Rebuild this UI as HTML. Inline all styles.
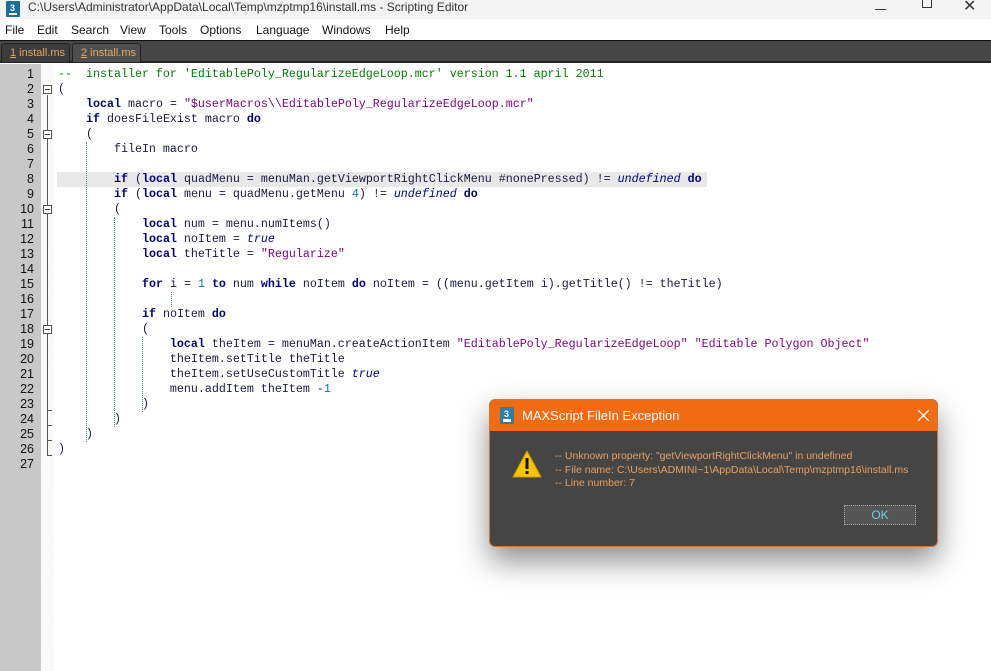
<!DOCTYPE html>
<html><head><meta charset="utf-8"><style>
*{margin:0;padding:0;box-sizing:border-box}
body{width:991px;height:671px;overflow:hidden;background:#fff;font-family:"Liberation Sans",sans-serif;position:relative}
.title{position:absolute;left:0;top:0;width:991px;height:19px;background:#f3f3f3;font-size:12px;color:#333}
.title span{position:absolute;left:28px;top:0px}
.menu{position:absolute;left:0;top:19px;width:991px;height:21px;background:#fff;font-size:12px;color:#111}
.menu span{position:absolute;top:4px}
.tabs{position:absolute;left:0;top:40px;width:991px;height:23px;background:#464646;border-top:1px solid #111;border-bottom:2px solid #222}
.tab{position:absolute;top:2px;height:19px;font-size:11px;color:#e8a860;padding:3px 0 0 8px;white-space:nowrap;border:1px solid #222;border-bottom:none;border-radius:3px 3px 0 0}
.gut{position:absolute;left:0;top:64px;width:41px;height:607px;background:#c8c8c8}
.fold{position:absolute;left:41px;top:64px;width:13px;height:607px;background:repeating-linear-gradient(45deg,#f4f4f4 0 1px,#fff 1px 2px)}
.ln{position:absolute;left:0;width:34px;text-align:right;font-family:"Liberation Sans",sans-serif;font-size:12.5px;color:#111}
pre{position:absolute;left:58px;top:67px;font-family:"Liberation Mono",monospace;font-size:11.67px;line-height:15px;color:#1a1a40}
.k{color:#00007f;font-weight:bold}.s{color:#7f007f}.n{color:#007f7f}.c{color:#007f00}.i{color:#00007f;font-style:italic}
.hl{position:absolute;left:57px;top:172px;width:650px;height:15px;background:#e8e8e8}
.fb{position:absolute;left:43px;width:9px;height:9px;border:1px solid #555;background:#fff}
.fb:after{content:"";position:absolute;left:1px;top:3px;width:5px;height:1px;background:#333}
.vl{position:absolute;left:47px;width:1px;background:#555}
.tk{position:absolute;left:47px;width:5px;height:1px;background:#555}
.guide{position:absolute;width:0;border-left:1px dotted #4a8a6a}
.dlg{position:absolute;left:489px;top:399px;width:449px;height:148px;background:#454545;border-radius:6px;border:1px solid #c87840;box-shadow:0 14px 30px rgba(0,0,0,.45);overflow:hidden}
.dh{height:31px;background:#f26a12;color:#fff;font-size:13px;position:relative}
.dh span{position:absolute;left:32px;top:8px}
.msg{position:absolute;left:65px;top:50px;font-size:10.5px;line-height:13.5px;color:#e8a060}
.ok{position:absolute;left:354px;top:105px;width:72px;height:20px;border:1px dotted #aaa;background:#555;color:#6fd0e0;font-size:12px;text-align:center;line-height:18px}
</style></head><body>
<div class="title"><svg style="position:absolute;left:6px;top:1px" width="14" height="16"><rect width="14" height="16" rx="1" fill="#1a6f94"/><text x="4" y="10" font-size="9" fill="#fff" font-family="Liberation Sans" font-weight="bold">3</text><rect x="3" y="12" width="8" height="2" fill="#fff"/></svg><span>C:\Users\Administrator\AppData\Local\Temp\mzptmp16\install.ms - Scripting Editor</span>
<div style="position:absolute;left:875px;top:9px;width:11px;height:1px;background:#333"></div>
<div style="position:absolute;left:922px;top:-3px;width:10px;height:11px;border:1px solid #333"></div>
<div style="position:absolute;left:963px;top:-4px;font-size:16px;color:#333">✕</div></div>
<div class="menu"><span style="left:5px">File</span><span style="left:37px">Edit</span><span style="left:71px">Search</span><span style="left:120px">View</span><span style="left:159px">Tools</span><span style="left:200px">Options</span><span style="left:256px">Language</span><span style="left:322px">Windows</span><span style="left:385px">Help</span></div>
<div class="tabs"><div class="tab" style="left:1px;width:69px;background:#3c3c3c"><u>1</u> install.ms</div><div class="tab" style="left:72px;width:69px;background:#4e4e4e"><u>2</u> install.ms</div></div>
<div class="gut"></div><div class="fold"></div>
<div class="hl"></div>
<div style="position:absolute;left:0;top:67px">
<div class="ln" style="top:0">1</div><div class="ln" style="top:15px">2</div><div class="ln" style="top:30px">3</div><div class="ln" style="top:45px">4</div><div class="ln" style="top:60px">5</div><div class="ln" style="top:75px">6</div><div class="ln" style="top:90px">7</div><div class="ln" style="top:105px">8</div><div class="ln" style="top:120px">9</div><div class="ln" style="top:135px">10</div><div class="ln" style="top:150px">11</div><div class="ln" style="top:165px">12</div><div class="ln" style="top:180px">13</div><div class="ln" style="top:195px">14</div><div class="ln" style="top:210px">15</div><div class="ln" style="top:225px">16</div><div class="ln" style="top:240px">17</div><div class="ln" style="top:255px">18</div><div class="ln" style="top:270px">19</div><div class="ln" style="top:285px">20</div><div class="ln" style="top:300px">21</div><div class="ln" style="top:315px">22</div><div class="ln" style="top:330px">23</div><div class="ln" style="top:345px">24</div><div class="ln" style="top:360px">25</div><div class="ln" style="top:375px">26</div><div class="ln" style="top:390px">27</div>
</div>
<div class="vl" style="top:95px;height:360px"></div>
<div class="tk" style="top:455px"></div><div class="tk" style="top:440px"></div><div class="tk" style="top:425px"></div><div class="tk" style="top:410px"></div>
<div class="fb" style="top:85px"></div><div class="fb" style="top:130px"></div><div class="fb" style="top:205px"></div><div class="fb" style="top:325px"></div>
<div class="guide" style="left:86px;top:142px;height:300px"></div>
<div class="guide" style="left:114px;top:217px;height:210px"></div>
<div class="guide" style="left:142px;top:337px;height:75px"></div>
<div class="guide" style="left:171px;top:292px;height:15px"></div>
<pre><span class="c">--  installer for 'EditablePoly_RegularizeEdgeLoop.mcr' version 1.1 april 2011</span>
(
    <span class="k">local</span> macro = <span class="s">"$userMacros\\EditablePoly_RegularizeEdgeLoop.mcr"</span>
    <span class="k">if</span> doesFileExist macro <span class="k">do</span>
    (
        fileIn macro

        <span class="k">if</span> (<span class="k">local</span> quadMenu = menuMan.getViewportRightClickMenu #nonePressed) != <span class="i">undefined</span> <span class="k">do</span>
        <span class="k">if</span> (<span class="k">local</span> menu = quadMenu.getMenu <span class="n">4</span>) != <span class="i">undefined</span> <span class="k">do</span>
        (
            <span class="k">local</span> num = menu.numItems()
            <span class="k">local</span> noItem = <span class="i">true</span>
            <span class="k">local</span> theTitle = <span class="s">"Regularize"</span>

            <span class="k">for</span> i = <span class="n">1</span> <span class="k">to</span> num <span class="k">while</span> noItem <span class="k">do</span> noItem = ((menu.getItem i).getTitle() != theTitle)

            <span class="k">if</span> noItem <span class="k">do</span>
            (
                <span class="k">local</span> theItem = menuMan.createActionItem <span class="s">"EditablePoly_RegularizeEdgeLoop"</span> <span class="s">"Editable Polygon Object"</span>
                theItem.setTitle theTitle
                theItem.setUseCustomTitle <span class="i">true</span>
                menu.addItem theItem -<span class="n">1</span>
            )
        )
    )
)</pre>
<div class="dlg"><div class="dh"><svg style="position:absolute;left:10px;top:7px" width="14" height="17"><rect width="14" height="17" rx="2" fill="#2a7fa8"/><text x="4" y="10" font-size="9" fill="#fff" font-family="Liberation Sans" font-weight="bold">3</text><rect x="3" y="12" width="8" height="3" fill="#fff"/></svg><span>MAXScript FileIn Exception</span>
<svg style="position:absolute;left:428px;top:10px" width="11" height="11"><path d="M0 0L11 11M11 0L0 11" stroke="#fff" stroke-width="1.3"/></svg></div>
<svg style="position:absolute;left:22px;top:50px" width="30" height="28"><path d="M15 1L29 27H1Z" fill="#f7c500" stroke="#d09a00" stroke-linejoin="round"/><rect x="13.5" y="8" width="3" height="11" fill="#111"/><rect x="13.5" y="21" width="3" height="3" fill="#111"/></svg>
<div class="msg">-- Unknown property: "getViewportRightClickMenu" in undefined<br>-- File name: C:\Users\ADMINI~1\AppData\Local\Temp\mzptmp16\install.ms<br>-- Line number: 7</div>
<div class="ok">OK</div></div>
</body></html>
